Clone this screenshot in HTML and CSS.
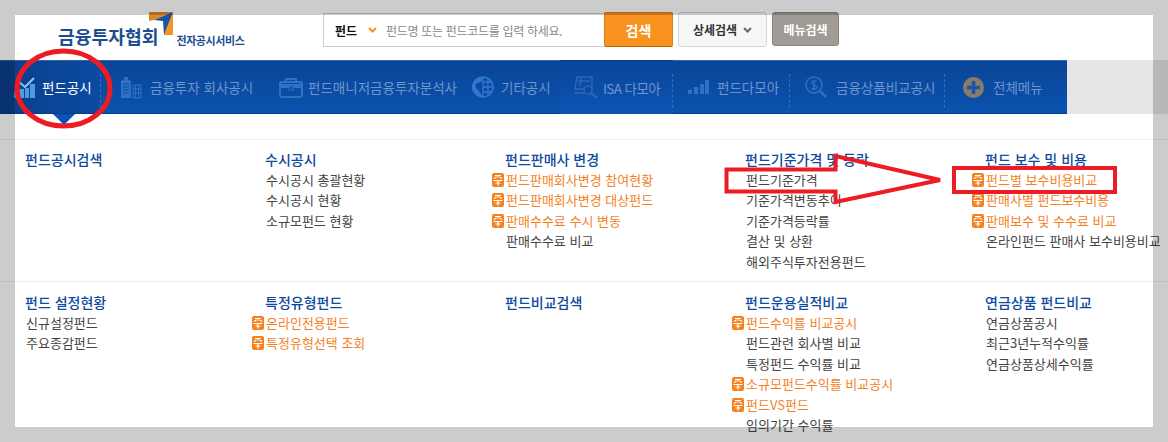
FILE: index.html
```html
<!DOCTYPE html>
<html lang="ko">
<head>
    <meta charset="UTF-8">
    <title>금융투자협회 전자공시서비스</title>
    <link rel="stylesheet" href="styles.css">
</head>
<body>
    <svg class="defs" width="0" height="0">
        <symbol id="hot" viewBox="0 0 12 14">
            <rect width="12" height="14" rx="2" fill="#f5821f"/>
            <path d="M3 2.500h6M6 2.500v2M2 5.500l2.500-1.500M10 5.500l-2.500-1.500M1.500 7.500h9M6 7.500v5M3.500 10h5" stroke="#fff" stroke-width="1.200" fill="none"/>
        </symbol>
    </svg>

    <div class="page">
        <header class="top">
            <a class="logo">
                <span class="logo-name">금융투자협회</span>
                <svg class="logo-mark" width="24" height="23" viewBox="0 0 24 23">
                    <path d="M0 0H24L5 8 0 9Z" fill="#dc8a22"/>
                    <path d="M24 0V23H15Z" fill="#f7941e"/>
                    <path d="M5 8L24 0 15 23 14 9Z" fill="#17569e"/>
                </svg>
                <span class="logo-sub">전자공시서비스</span>
            </a>
            <div class="search">
                <div class="search-box">
                    <span class="search-type">펀드</span>
                    <svg width="9" height="6" viewBox="0 0 9 6"><path d="M1 1l3.500 3.500L8 1" stroke="#f7931e" stroke-width="2" fill="none"/></svg>
                    <span class="search-hint">펀드명 또는 펀드코드를 입력 하세요.</span>
                </div>
                <button class="btn-search">검색</button>
                <button class="btn-detail">상세검색
                    <svg width="9" height="6" viewBox="0 0 9 6"><path d="M1 1l3.500 3.500L8 1" stroke="#666" stroke-width="2" fill="none"/></svg>
                </button>
                <button class="btn-menu">메뉴검색</button>
            </div>
        </header>

        <div class="nav-band">
            <nav class="nav">
                <a class="nav-item active">
                    <svg width="23" height="22" viewBox="0 0 23 22">
                        <path d="M1 16h3v6H1zM6 13h5v9H6zM12 12h4v10h-4zM17 8h5v14h-5z" fill="#4b9be6"/>
                        <path d="M6 6l6 5 9-9" stroke="#8fc4f2" stroke-width="2" fill="none"/>
                    </svg>
                    펀드공시
                </a>
                <a class="nav-item">
                    <svg width="22" height="23" viewBox="0 0 22 23">
                        <path d="M1 22V5l3-1V1h4v3l3 1v17z" fill="#2e72c6"/>
                        <path d="M3 8h6M3 11h6M3 14h6M3 17h6" stroke="#0c4a9f" stroke-width="1"/>
                        <path d="M13 9h8v13h-8zM15.500 9v13M18.500 9v13M13 13h8M13 17h8" fill="none" stroke="#2e72c6" stroke-width="1"/>
                    </svg>
                    금융투자 회사공시
                </a>
                <a class="nav-item">
                    <svg width="24" height="21" viewBox="0 0 24 21">
                        <rect x="1" y="5" width="22" height="15" rx="2" fill="none" stroke="#2e72c6" stroke-width="2"/>
                        <path d="M7 5V2h10v3" fill="none" stroke="#2e72c6" stroke-width="2"/>
                        <path d="M1 7h22v4H1z" fill="#2e72c6"/>
                        <rect x="10" y="9" width="4" height="4" fill="#0c4a9f" stroke="#2e72c6"/>
                    </svg>
                    펀드매니저금융투자분석사
                </a>
                <a class="nav-item">
                    <svg width="22" height="22" viewBox="0 0 22 22">
                        <path d="M10 1A10 10 0 0 0 10 21C10 18 7 15 5 13C3 11 3 8 5 7C7 6 10 6 10 4Z" fill="#3079d0"/>
                        <circle cx="11" cy="11" r="10" fill="none" stroke="#3079d0" stroke-width="1.500"/>
                        <path d="M11 1v20M16 2v18M11 6h9M11 11h10M11 16h9" fill="none" stroke="#3079d0" stroke-width="1.300"/>
                    </svg>
                    기타공시
                </a>
                <a class="nav-item isa">
                    <svg width="26" height="24" viewBox="0 0 26 24">
                        <path d="M4 1h15v12H2zM1 17h10" fill="none" stroke="#2a68ba" stroke-width="1.500"/>
                        <path d="M8 1l-1 9M5 5h12" fill="none" stroke="#2a68ba" stroke-width="1.500"/>
                        <circle cx="15" cy="14" r="4" fill="#0c4a9f" stroke="#2a68ba" stroke-width="1.500"/>
                        <path d="M18 17l6 5" stroke="#2a68ba" stroke-width="2.500"/>
                    </svg>
                    ISA 다모아
                </a>
                <a class="nav-item">
                    <svg width="21" height="14" viewBox="0 0 21 14">
                        <path d="M0 10h4v4H0zM6 7h4v7H6zM12 4h4v10h-4zM17 0h4v14h-4z" fill="#2e72c6"/>
                    </svg>
                    펀드다모아
                </a>
                <a class="nav-item">
                    <svg width="22" height="23" viewBox="0 0 22 23">
                        <circle cx="9" cy="9" r="8" fill="none" stroke="#2e72c6" stroke-width="1.500"/>
                        <path d="M15 15l6 6" stroke="#2e72c6" stroke-width="2.500"/>
                        <path d="M11.500 6c-1-1.500-5-1.500-5 .8S11.800 9 11.800 11.200 7.500 13.500 6.300 12M9 3.500v11" fill="none" stroke="#2e72c6" stroke-width="1.300"/>
                    </svg>
                    금융상품비교공시
                </a>
                <a class="nav-item">
                    <svg width="21" height="21" viewBox="0 0 21 21">
                        <circle cx="10.500" cy="10.500" r="10.500" fill="#8b7a67"/>
                        <path d="M10.500 4v13M4 10.500h13" stroke="#1757a8" stroke-width="3.500"/>
                    </svg>
                    전체메뉴
                </a>
            </nav>
        </div>
        <div class="nav-pointer"></div>

        <section class="menu-row first">
            <div class="menu-col">
                <h3>펀드공시검색</h3>
            </div>
            <div class="menu-col">
                <h3>수시공시</h3>
                <ul>
                    <li>수시공시 총괄현황</li>
                    <li>수시공시 현황</li>
                    <li>소규모펀드 현황</li>
                </ul>
            </div>
            <div class="menu-col">
                <h3>펀드판매사 변경</h3>
                <ul>
                    <li class="hot"><svg class="hot-icon"><use href="#hot"/></svg>펀드판매회사변경 참여현황</li>
                    <li class="hot"><svg class="hot-icon"><use href="#hot"/></svg>펀드판매회사변경 대상펀드</li>
                    <li class="hot"><svg class="hot-icon"><use href="#hot"/></svg>판매수수료 수시 변동</li>
                    <li>판매수수료 비교</li>
                </ul>
            </div>
            <div class="menu-col">
                <h3>펀드기준가격 및 등락</h3>
                <ul>
                    <li>펀드기준가격</li>
                    <li>기준가격변동추이</li>
                    <li>기준가격등락률</li>
                    <li>결산 및 상환</li>
                    <li>해외주식투자전용펀드</li>
                </ul>
            </div>
            <div class="menu-col">
                <h3>펀드 보수 및 비용</h3>
                <ul>
                    <li class="hot"><svg class="hot-icon"><use href="#hot"/></svg>펀드별 보수비용비교</li>
                    <li class="hot"><svg class="hot-icon"><use href="#hot"/></svg>판매사별 펀드보수비용</li>
                    <li class="hot"><svg class="hot-icon"><use href="#hot"/></svg>판매보수 및 수수료 비교</li>
                    <li>온라인펀드 판매사 보수비용비교</li>
                </ul>
            </div>
        </section>

        <section class="menu-row">
            <div class="menu-col">
                <h3>펀드 설정현황</h3>
                <ul>
                    <li>신규설정펀드</li>
                    <li>주요종감펀드</li>
                </ul>
            </div>
            <div class="menu-col">
                <h3>특정유형펀드</h3>
                <ul>
                    <li class="hot"><svg class="hot-icon"><use href="#hot"/></svg>온라인전용펀드</li>
                    <li class="hot"><svg class="hot-icon"><use href="#hot"/></svg>특정유형선택 조회</li>
                </ul>
            </div>
            <div class="menu-col">
                <h3>펀드비교검색</h3>
            </div>
            <div class="menu-col">
                <h3>펀드운용실적비교</h3>
                <ul>
                    <li class="hot"><svg class="hot-icon"><use href="#hot"/></svg>펀드수익률 비교공시</li>
                    <li>펀드관련 회사별 비교</li>
                    <li>특정펀드 수익률 비교</li>
                    <li class="hot"><svg class="hot-icon"><use href="#hot"/></svg>소규모펀드수익률 비교공시</li>
                    <li class="hot"><svg class="hot-icon"><use href="#hot"/></svg>펀드VS펀드</li>
                    <li>임의기간 수익률</li>
                </ul>
            </div>
            <div class="menu-col">
                <h3>연금상품 펀드비교</h3>
                <ul>
                    <li>연금상품공시</li>
                    <li>최근3년누적수익률</li>
                    <li>연금상품상세수익률</li>
                </ul>
            </div>
        </section>
    </div>

    <!-- screenshot frame and red markup on top of the page -->
    <div class="frame"></div>
    <svg class="markup" width="1168" height="442" viewBox="0 0 1168 442">
        <ellipse cx="63.500" cy="88.500" rx="46.500" ry="37.500" fill="none" stroke="#ed1c24" stroke-width="5"/>
        <path d="M726.500 169.500H835.500V156L940 180 835.500 202V191.500H726.500Z" fill="none" stroke="#ed1c24" stroke-width="4"/>
        <rect x="954" y="168" width="161" height="24" fill="none" stroke="#ed1c24" stroke-width="4"/>
    </svg>
</body>
</html>
```

FILE: styles.css
```css
body {
    margin: 0;
    background-color: #ffffff;
    font-family: "Noto Sans CJK KR", "Liberation Sans", sans-serif;
    color: #444444;
    overflow: hidden;
}

.defs {
    position: absolute;
}

.page {
    width: 1168px;
    height: 442px;
    overflow: hidden;
}

/* header */
.top {
    display: flex;
    height: 60px;
    box-sizing: border-box;
    padding-top: 12px;
}

.logo {
    display: flex;
    width: 323px;
    height: 36px;
    padding-left: 58px;
    box-sizing: border-box;
}

.logo-name {
    align-self: flex-end;
    font-size: 18.2px;
    font-weight: 700;
    line-height: 20px;
    margin-bottom: 2px;
    color: #1c4f8f;
    white-space: nowrap;
}

.logo-mark {
    margin-left: -9px;
    flex: none;
}

.logo-sub {
    align-self: flex-end;
    margin-left: 3px;
    margin-bottom: 1px;
    font-size: 11px;
    font-weight: 700;
    line-height: 14px;
    letter-spacing: -0.4px;
    color: #1c4f8f;
    white-space: nowrap;
}

.search {
    display: flex;
    align-items: flex-start;
}

.search-box {
    display: flex;
    align-items: center;
    width: 281px;
    height: 34px;
    box-sizing: border-box;
    margin-top: 1px;
    padding-left: 11px;
    border: 1px solid #cccccc;
    border-right: none;
    font-size: 12px;
}

.search-type {
    width: 33px;
    font-weight: 700;
    color: #111111;
}

.search-hint {
    margin-left: 9px;
    color: #888888;
    letter-spacing: -0.3px;
    white-space: nowrap;
}

button {
    font-family: inherit;
    padding: 0;
    cursor: pointer;
}

.btn-search {
    width: 69px;
    height: 35px;
    border: 1px solid #d9801a;
    border-bottom-color: #b8610f;
    border-radius: 2px;
    background-color: #f7931e;
    color: #ffffff;
    font-size: 14px;
    font-weight: 700;
}

.btn-detail {
    display: flex;
    align-items: center;
    justify-content: center;
    gap: 6px;
    width: 89px;
    height: 35px;
    margin-left: 5px;
    border: 1px solid #d5d5d5;
    border-radius: 3px;
    background-color: #f7f7f7;
    color: #333333;
    font-size: 12px;
    font-weight: 700;
}

.btn-menu {
    width: 67px;
    height: 34px;
    margin-left: 5px;
    border: 1px solid #8a857e;
    border-radius: 3px;
    background-color: #a09b94;
    color: #ffffff;
    font-size: 12px;
    font-weight: 700;
}

/* main nav */
.nav-band {
    height: 54px;
    background-color: #e6e6e6;
}

.nav {
    display: grid;
    grid-template-columns: 101px 164px 197px 98px 113px 117px 155px 122px;
    width: 1067px;
    height: 54px;
    box-sizing: border-box;
    border-top: 1px solid #2c62ad;
    border-bottom: 1px solid #003a92;
    background: linear-gradient(#0a4596, #0b52b0);
}

.nav-item {
    display: flex;
    align-items: center;
    gap: 8px;
    position: relative;
    padding-left: 19px;
    font-size: 13.5px;
    color: #7095cb;
    white-space: nowrap;
}

.nav-item.active {
    padding-left: 13px;
    gap: 6px;
    color: #ffffff;
    background: linear-gradient(90deg, #0a3f8a, #0b4ba2);
}

.nav-item:nth-child(3) { padding-left: 14px; gap: 5px; }
.nav-item:nth-child(4) { padding-left: 10px; gap: 7px; }
.nav-item:nth-child(5) { padding-left: 13px; gap: 4px; letter-spacing: -0.6px; }
.nav-item:nth-child(6) { padding-left: 15px; }
.nav-item:nth-child(7) { padding-left: 15px; gap: 9px; }
.nav-item:nth-child(8) { padding-left: 18px; gap: 9px; }

/* dotted separators */
.nav-item.active::after,
.nav-item.isa::after,
.nav-item:nth-child(6)::after,
.nav-item:nth-child(7)::after {
    content: "";
    position: absolute;
    right: 0;
    top: 13px;
    height: 34px;
    border-right: 1px dashed #3a6db5;
}

.nav-item.isa {
    margin-top: -1px;
    margin-bottom: -1px;
    border-top: 1px solid #0a3a9c;
    background: linear-gradient(#0a4598, #0b55b4);
}

.nav-pointer {
    width: 0;
    height: 0;
    margin-left: 53px;
    margin-bottom: -11px;
    border-left: 11px solid transparent;
    border-right: 11px solid transparent;
    border-top: 11px solid #0b52b0;
}

/* menu grid */
.menu-row {
    display: grid;
    grid-template-columns: repeat(5, 240px);
    padding: 10px 0 0 25px;
    border-top: 1px solid #eeeeee;
}

.menu-row.first {
    height: 142px;
    box-sizing: border-box;
    margin-top: 25px;
    padding-top: 9px;
}

.menu-col h3 {
    margin: 0;
    font-size: 14px;
    font-weight: 500;
    line-height: 20.5px;
    color: #0d4aa0;
    white-space: nowrap;
}

.menu-col ul {
    margin: 0;
    padding: 0 0 0 1px;
    list-style: none;
}

.menu-col li {
    font-size: 13px;
    line-height: 20.5px;
    white-space: nowrap;
}

.menu-col li.hot {
    color: #f5821f;
}

.hot-icon {
    width: 12px;
    height: 14px;
    margin-left: -14px;
    margin-right: 2px;
    vertical-align: -2px;
}

/* overlays */
.frame {
    position: absolute;
    left: 0;
    top: 0;
    width: 1168px;
    height: 442px;
    box-sizing: border-box;
    border: 15px solid rgba(0, 0, 0, 0.2);
}

.markup {
    position: absolute;
    left: 0;
    top: 0;
}
```
